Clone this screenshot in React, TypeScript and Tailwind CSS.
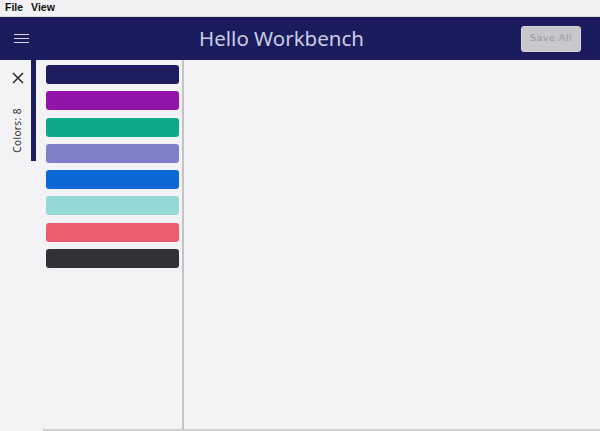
import React from "react";

const colors = ["#1c1d5e", "#9214a8", "#10a88a", "#7f81c8", "#0b69d6", "#96d8d5", "#ec5c70", "#323135"];

export default function App() {
  return (
    <div className="w-[600px] h-[431px] flex flex-col bg-[#f3f2f4] overflow-hidden" style={{ fontFamily: '"Noto Sans", "Open Sans", sans-serif' }}>
      <div className="h-[17px] flex items-center gap-[8px] pl-[5px] bg-[#f2f1f3] text-[10.5px] font-bold text-[#111] border-b border-[#dcdcdc]" style={{ fontFamily: '"Liberation Sans", Arial, sans-serif' }}>
        <span>File</span>
        <span>View</span>
      </div>
      <div className="h-[43px] flex items-center bg-[#1b1c5e]">
        <div className="w-[42px] h-full flex items-center pl-[14px]">
          <div className="flex flex-col gap-[2.5px]">
            <div className="w-[15px] h-[1.5px] bg-[#d8d8e8]" />
            <div className="w-[15px] h-[1.5px] bg-[#d8d8e8]" />
            <div className="w-[15px] h-[1.5px] bg-[#d8d8e8]" />
          </div>
        </div>
        <div className="flex-1 text-center text-[20.5px] text-[#cbcce2] leading-none">Hello Workbench</div>
        <div className="pr-[19px]">
          <div className="w-[60px] h-[26px] rounded-[3px] bg-[#c8c7cd] border border-[#d6d6da] flex items-center justify-center text-[9.5px] tracking-[0.5px] text-[#97979c]" style={{ fontFamily: '"DejaVu Sans", sans-serif' }}>
            Save All
          </div>
        </div>
      </div>
      <div className="flex-1 flex min-h-0">
        <div className="w-[182px] flex shrink-0">
          <div className="w-[31px] flex flex-col items-center pt-[12px] gap-[24px]">
            <svg width="12" height="12" viewBox="0 0 12 12" className="ml-[4px]">
              <path d="M1 1 L11 11 M11 1 L1 11" stroke="#2a2a2a" strokeWidth="1.5" />
            </svg>
            <div className="h-[44px] w-[14px] flex items-center justify-center ml-[4px]">
              <span className="-rotate-90 whitespace-nowrap text-[10px] text-[#333] tracking-[0.4px]">Colors: 8</span>
            </div>
          </div>
          <div className="w-[5px] h-[101px] bg-[#1b1c5e]" />
          <div className="flex-1 flex flex-col gap-[7.3px] pt-[5px] pl-[10px] pr-[3px]">
            {colors.map((c) => (
              <div key={c} className="h-[19px] rounded-[3px]" style={{ backgroundColor: c }} />
            ))}
          </div>
        </div>
        <div className="w-[2px] bg-[#c4c4c6] shrink-0" />
        <div className="flex-1" />
      </div>
      <div className="h-[2px] ml-[43px] bg-[#cfcfd1]" />
    </div>
  );
}
